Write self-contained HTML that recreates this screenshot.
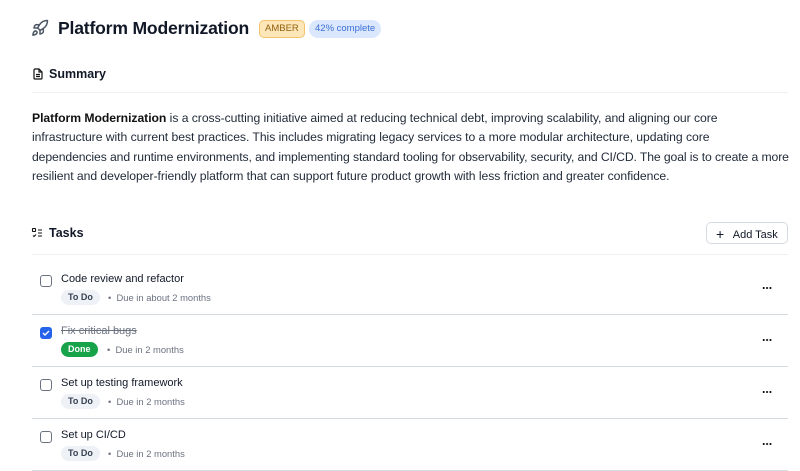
<!DOCTYPE html>
<html><head><meta charset="utf-8">
<style>
*{box-sizing:border-box;margin:0;padding:0}
body{width:800px;height:450px;overflow:hidden;background:#fff;font-family:"Liberation Sans",sans-serif;color:#111827;position:relative}
.abs{position:absolute}
.title{left:58px;top:18px;font-size:17.6px;font-weight:bold;letter-spacing:-0.2px}
.badge{font-size:9.5px;border-radius:5px;padding:0 5px;height:18px;line-height:16px}
.h2{font-size:12.5px;font-weight:bold}
.hr{height:1px;background:#eef0f3;left:32px;width:756px}
.p{left:32px;top:109px;width:768px;font-size:12.2px;line-height:19.4px;color:#1f2937;letter-spacing:-0.05px;white-space:nowrap}
.row{left:32px;width:756px;height:52px;border-bottom:1px solid #d6dbe3}
.cb{position:absolute;left:8px;top:12px;width:12px;height:12px;border:1.3px solid #6b7280;border-radius:3px;background:#fff}
.cb.on{background:#2563eb;border-color:#2563eb}
.tt{position:absolute;left:29px;top:10px;font-size:11px;color:#111827}
.st{position:absolute;left:29px;top:27px;height:15px;line-height:15px;font-size:9px;font-weight:bold;border-radius:8px;padding:0 7px}
.todo{background:#eef1f6;color:#374151}
.done{background:#16a34a;color:#fff}
.due{position:absolute;top:27px;line-height:15px;font-size:9.4px;color:#6b7280}
.dots{position:absolute;left:730px;top:24px;width:10px;height:2px;background:radial-gradient(circle,#111 0.9px,transparent 1.1px) 0 0/3.4px 2px repeat-x}
</style></head><body>
<svg class="abs" style="left:31px;top:19px" width="18" height="18" viewBox="0 0 24 24" fill="none" stroke="#4b5563" stroke-width="2" stroke-linecap="round" stroke-linejoin="round"><path d="M4.5 16.5c-1.5 1.26-2 5-2 5s3.74-.5 5-2c.71-.84.7-2.13-.09-2.91a2.18 2.18 0 0 0-2.91-.09z"/><path d="m12 15-3-3a22 22 0 0 1 2-3.95A12.88 12.88 0 0 1 22 2c0 2.72-.78 7.5-6 11a22.35 22.35 0 0 1-4 2z"/><path d="M9 12H4s.55-3.03 2-4c1.62-1.08 5 0 5 0"/><path d="M12 15v5s3.03-.55 4-2c1.08-1.62 0-5 0-5"/></svg>
<div class="abs title">Platform Modernization</div>
<div class="abs badge" style="left:259px;top:20px;background:#fde7b8;border:1px solid #f4c26b;color:#92600e">AMBER</div>
<div class="abs badge" style="left:309px;top:20px;background:#dbe7fd;color:#3b6fd8;border-radius:9px;padding:0 6px;line-height:18px">42% complete</div>

<svg class="abs" style="left:32px;top:68px" width="12" height="12" viewBox="0 0 24 24" fill="none" stroke="#111" stroke-width="2.4"><path d="M14 2H6a2 2 0 0 0-2 2v16a2 2 0 0 0 2 2h12a2 2 0 0 0 2-2V8z"/><path d="M14 2v6h6M8 13h8M8 17h8"/></svg>
<div class="abs h2" style="left:49px;top:67px">Summary</div>
<div class="abs hr" style="top:92px"></div>
<div class="abs p"><b style="color:#111">Platform Modernization</b> is a cross-cutting initiative aimed at reducing technical debt, improving scalability, and aligning our core<br>infrastructure with current best practices. This includes migrating legacy services to a more modular architecture, updating core<br><span style="letter-spacing:-0.1px">dependencies and runtime environments, and implementing standard tooling for observability, security, and CI/CD. The goal is to create a more</span><br>resilient and developer-friendly platform that can support future product growth with less friction and greater confidence.</div>

<svg class="abs" style="left:31px;top:227px" width="13" height="12" viewBox="0 0 24 24" fill="none" stroke="#111" stroke-width="2.2"><rect x="2" y="3" width="6" height="6" rx="1"/><path d="m3 17 2 2 4-4M13 6h8M13 12h8M13 18h8"/></svg>
<div class="abs h2" style="left:49px;top:226px">Tasks</div>
<div class="abs" style="left:706px;top:222px;width:82px;height:22px;border:1px solid #d6dbe3;border-radius:5px;font-size:11px;line-height:20px;padding-left:9px"><span style="font-size:14px;position:relative;top:1px">+</span>&nbsp;&nbsp; Add Task</div>
<div class="abs hr" style="top:254px"></div>

<div class="abs row" style="top:263px"><div class="cb"></div><div class="tt">Code review and refactor</div><div class="st todo">To Do</div><div class="due" style="left:76px">•&nbsp; Due in about 2 months</div><div class="dots"></div></div>
<div class="abs row" style="top:315px"><div class="cb on"><svg width="10" height="10" viewBox="0 0 10 10" style="position:absolute;left:0;top:0"><path d="M2 5l2 2 4-4" stroke="#fff" stroke-width="1.4" fill="none"/></svg></div><div class="tt" style="color:#6b7280;text-decoration:line-through">Fix critical bugs</div><div class="st done">Done</div><div class="due" style="left:75px">•&nbsp; Due in 2 months</div><div class="dots"></div></div>
<div class="abs row" style="top:367px"><div class="cb"></div><div class="tt">Set up testing framework</div><div class="st todo">To Do</div><div class="due" style="left:76px">•&nbsp; Due in 2 months</div><div class="dots"></div></div>
<div class="abs row" style="top:419px"><div class="cb"></div><div class="tt">Set up CI/CD</div><div class="st todo">To Do</div><div class="due" style="left:76px">•&nbsp; Due in 2 months</div><div class="dots"></div></div>
</body></html>
